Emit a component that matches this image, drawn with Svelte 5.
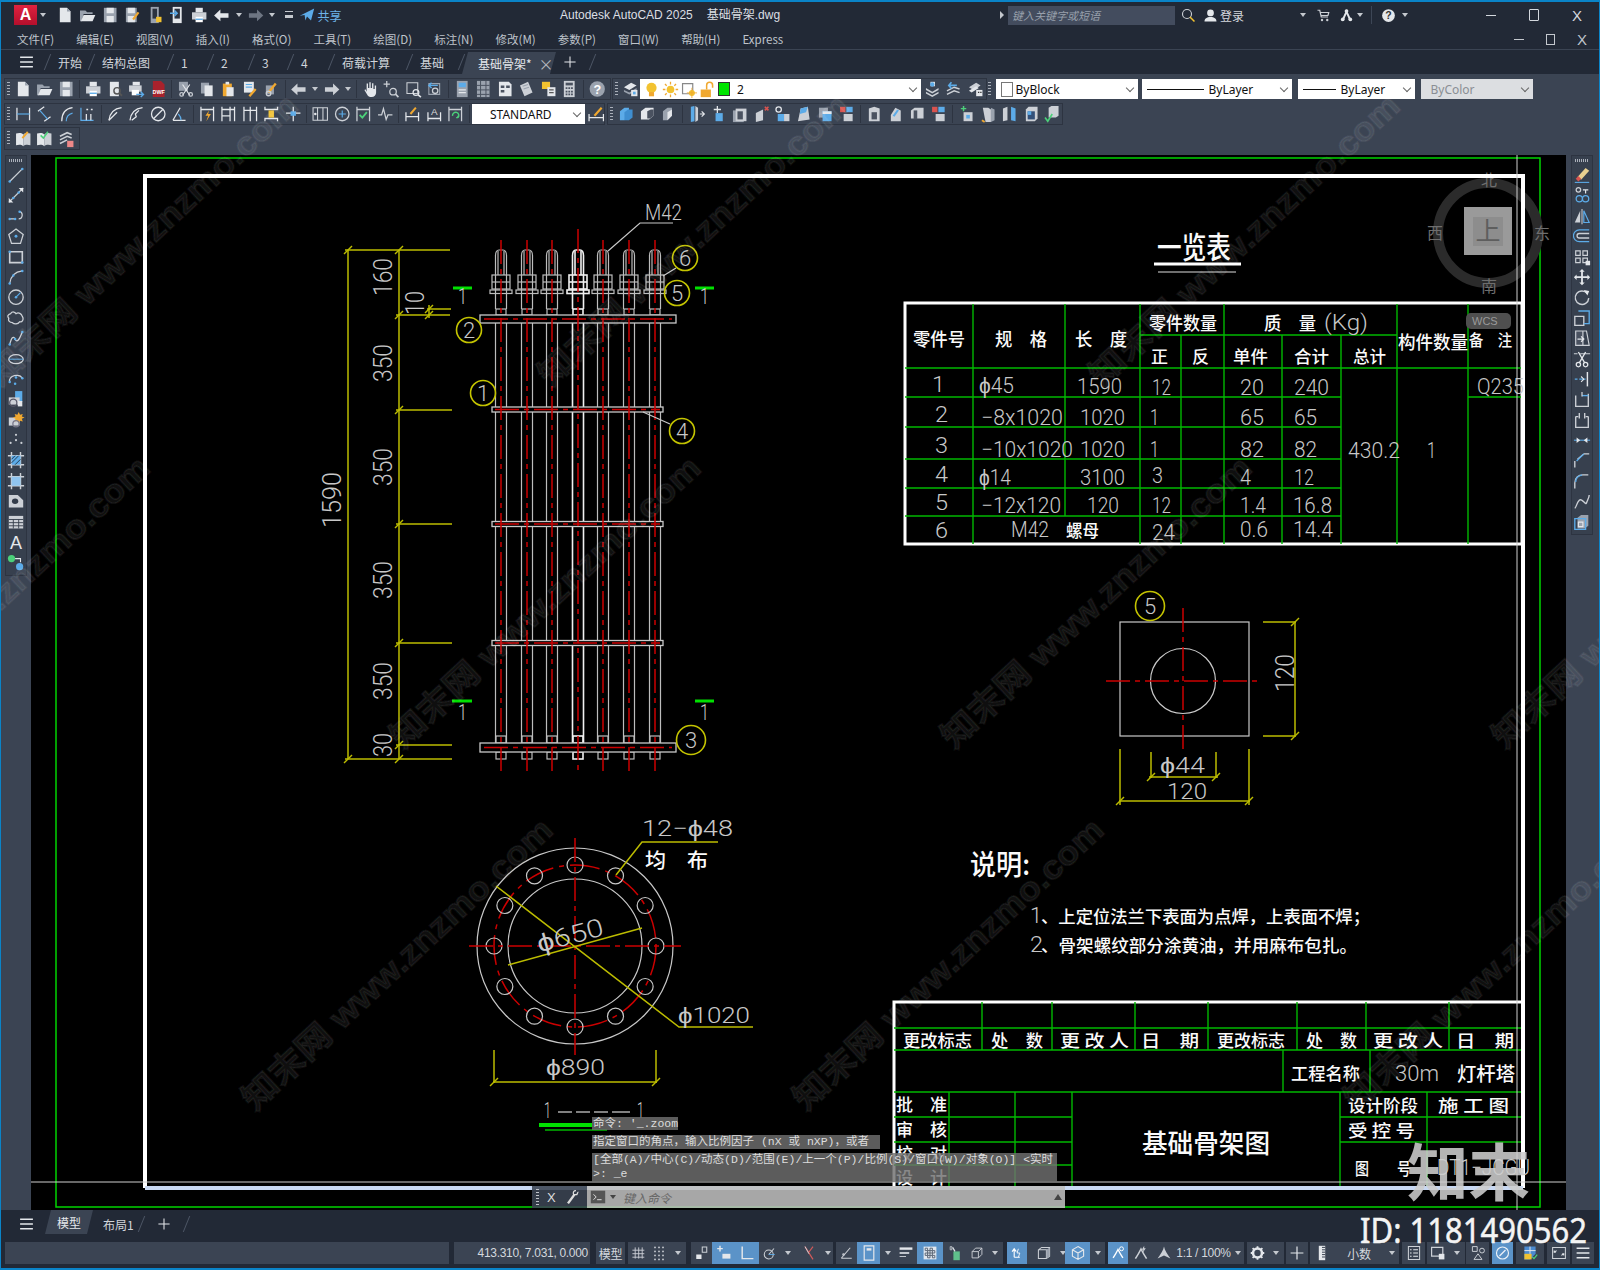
<script>
  const W = '#e4e7eb', G = '#9aa2ae', L = '#ccd0d6', B = '#5cabe8', O = '#f0a830', R = '#d9534f', Y = '#f2c230';
  const s = (d, c = L, w = 1.4) => `<path d="${d}" fill="none" stroke="${c}" stroke-width="${w}"/>`;
  const f = (d, c = L) => `<path d="${d}" fill="${c}"/>`;
  const dot = (x, y, c = B, r = 1.4) => `<circle cx="${x}" cy="${y}" r="${r}" fill="${c}"/>`;
  const ring = (x, y, r, c = L, w = 1.4) => `<circle cx="${x}" cy="${y}" r="${r}" fill="none" stroke="${c}" stroke-width="${w}"/>`;

  const icons = {
    doc: f('M4 2h8l4 4v12H4z', W) + f('M12 2l4 4h-4z', G),
    open: f('M2 5h6l2 2h6v2H6l-2 8H2z', G) + f('M6 10h13l-3 7H3z', W),
    save: f('M3 2h14v16H3z', G) + f('M6 2h8v6H6zM6 11h8v7H6z', W),
    saveas: f('M3 2h12v16H3z', G) + f('M5 2h8v6H5zM5 11h8v7H5z', W) + s('M11 15l6-8', O, 2.4),
    phone: f('M5 1h9v18H5z', G) + f('M7 3h5v11H7z', '#2c3340') + f('M11 12h6v6h-6z', Y),
    phone2: f('M5 1h10v18H5z', W) + f('M7 3h6v11H7z', '#2c3340') + s('M2 8h8M7 5l3 3-3 3', B, 1.6),
    print: f('M6 2h8v5H6z', W) + f('M2 7h16v8H2z', L) + f('M6 12h8v6H6z', '#fff') + f('M6 14h8v1.5H6z', B),
    prev: f('M4 2h10v16H4z', W) + ring(12, 12, 3.5, '#555', 1.6) + s('M14.5 14.5l3 3', '#555', 2),
    pub: f('M6 2h8v4H6z', W) + f('M2 6h14v7H2z', L) + f('M5 11h8v6H5z', '#fff') + s('M10 16h8M15 13l3 3-3 3', B, 1.6),
    dwf: f('M4 1h9l4 4v14H4z', '#a8222c') + `<text x="10.5" y="15" font-size="6" font-weight="700" fill="#fff" text-anchor="middle" font-family="Liberation Sans">DWF</text>`,
    cut: f('M3 2h10v10H3z', G) + s('M7 5l8 12M15 5L7 17', W, 1.3) + ring(6, 16, 2) + ring(16, 16, 2),
    copy: f('M3 3h9v12H3z', G) + f('M7 6h9v12H7z', W),
    paste: f('M4 4h10v14H4z', O) + f('M7 2h4v3H7z', W) + f('M8 8h8v10H8z', W),
    match: f('M3 2h11v12H3z', W) + s('M5 5h7M5 8h7', B, 1.3) + s('M9 18l7-8', O, 2.6),
    brush: f('M4 6h9v10H4z', G) + s('M7 14l8-10', O, 2.6) + ring(7, 15, 2.5, L),
    undo: f('M8 4v4h9v5H8v4L1 10.5z', L),
    redo: f('M12 4v4H3v5h9v4l7-6.5z', L),
    redoD: f('M12 4v4H3v5h9v4l7-6.5z', '#6d7582'),
    undoW: f('M8 4v4h9v5H8v4L1 10.5z', W),
    pan: f('M6 10V4h1.5v5H9V2.5h1.5V9H12V3.5h1.5V10H15V6h1.5v8c0 3-2 5-5 5-2.500 0-4-1-5-3l-3-5 1.200-.8L6 13z', W),
    zoomrt: s('M5 1v7M1.500 4.500h7', L) + ring(12, 13, 3.6) + s('M15 16l3 3', L, 1.8),
    zoomwin: s('M3 3h12v12H3z', L, 1.2) + ring(13, 14, 3.2, W) + s('M15.500 16.500l3 2.500', W, 1.8),
    zoomprev: s('M4 4h12v12H4z', G, 1.2) + ring(11, 12, 3) + s('M5 6h9M7 3L4 6l3 3', B, 1.6),
    props: f('M4 1h12v18H4z', G) + f('M6 3h8v5H6z', B) + s('M6 11h8M6 14h8', W, 1.4),
    design: f('M3 1h14v18H3z', G) + s('M7 1v18M13 1v18M3 6h14M3 11h14M3 16h14', '#4a5260', 1.1),
    sheet: f('M3 2h11l3 3v13H3z', W) + f('M5 6h4v3H5zM11 6h4v3h-4zM5 11h4v3H5z', '#4a5260'),
    tool: f('M3 6l9-4 5 12-9 4z', L) + s('M6 7l6-2M7 10l6-2', G, 1.2),
    mkup: f('M3 2h9v8H3z', Y) + f('M9 8h9v10H9z', W) + s('M11 11h5M11 14h5', '#555', 1.2),
    calc: f('M4 1h12v18H4z', L) + f('M6 3h8v3H6z', '#4a5260') + f('M6 8h2v2H6zM9 8h2v2H9zM12 8h2v2h-2zM6 12h2v2H6zM9 12h2v2H9zM12 12h2v2h-2zM6 15h2v2H6zM9 15h2v2H9zM12 15h2v2h-2z', '#4a5260'),
    help: `<circle cx="10" cy="10" r="8.500" fill="${G}"/><text x="10" y="15" font-size="14" font-weight="700" text-anchor="middle" fill="#fff" font-family="Liberation Sans">?</text>`,
    helpW: `<circle cx="10" cy="10" r="8.500" fill="${W}"/><text x="10" y="15" font-size="14" font-weight="700" text-anchor="middle" fill="#333" font-family="Liberation Sans">?</text>`,
    layer: f('M3 8l8-5 6 3-8 5z', W) + f('M3 11l6 3 8-5v2l-8 5-6-3z', G) + f('M11 11h7v7h-7z', W) + f('M13 13h3v3h-3z', B),
    layers: f('M8 2h5v5H8z', W) + f('M3 9l7 4 7-4v2l-7 4-7-4zM3 13l7 4 7-4v2l-7 4-7-4z', L) + dot(10, 5, B, 2.4),
    layerp: s('M3 16l8-4 6 2M3 12l8-4 6 2', L, 1.6) + s('M5 6h9M8 2.500L5 6l3 3.500', B, 1.8),
    layers2: f('M3 8l8-5 5 3-8 5z', L) + f('M3 12l8-5 3 2-8 5z', W) + f('M11 11h7v7h-7z', W) + f('M13 13h1.500v1.500H13zM15.500 13h1.500v1.500h-1.500z', '#333'),
    dlin: s('M3 3v14M17 3v14', W) + s('M3 10h14', B, 1.3),
    dali: s('M3 7l7-5M10 18l7-5', W) + s('M5 6l9 10', B, 1.3),
    darc: s('M5 18C5 9 9 4 17 3', W) + s('M10 18c0-5 3-8 7-9', B, 1.3),
    dord: s('M3 3v14h14', B, 1.3) + s('M9 10v7M14 10v7M9 5h2M14 5h2', W),
    drad: s('M3 17C4 9 9 4 17 3', W) + s('M3 17l9-9', W),
    djog: s('M3 17C4 9 9 4 17 3', W) + s('M5 17l5-4-1-3 4-4', W),
    ddia: ring(10, 10, 7.500, W) + s('M5 15L15 5', W),
    dang: s('M3 17h14M3 17l8-14', W) + s('M12 17c0-3-1-5-3-7', B, 1.3),
    dqk: s('M3 2v16M17 2v16M3 5h14', W) + f('M12 6l-4 6h3l-2 6 5-8h-3z', O),
    dbase: s('M3 2v16M17 2v16M3 5h14M3 12h9M12 2v16', W),
    dcont: s('M3 2v16M10 2v16M17 2v16M3 6h14', W),
    dspace: s('M3 2v3h14V2M3 18v-3h14v3', W) + f('M7 6h6v8H7z', Y),
    dbrk: s('M10 2v16M2 9h16', W) + f('M7 7h6v5H7z', B),
    tol: s('M2 3h16v14H2z', L, 1.2) + s('M7 3v14M13 3v14', L, 1.2) + dot(4.500, 10, W, 1.4),
    cmark: ring(10, 10, 7.500, L) + s('M10 6v8M6 10h8', B, 1.3),
    insp: s('M3 2v16M17 2v16M3 5h14', L) + s('M6 11l3 3 5-6', '#4cd07a', 2),
    jogl: s('M2 11h4l2-7 3 12 2-5h5', L),
    dedit: s('M3 8v10M17 8v10M3 13h14', W) + s('M8 10l6-7', O, 2.2),
    dtxt: s('M3 8v10M17 8v10M3 15h14', W) + `<text x="10" y="11" font-size="11" text-anchor="middle" fill="#ddd" font-family="Liberation Sans">A</text>`,
    dupd: s('M3 2v16M17 2v16M3 5h14', L) + s('M7 12a3.500 3.500 0 1 1 6 2M13 14l-2 0M13 14l0 -2', '#4cd07a', 1.6),
    dstyle: s('M2 10v8M18 10v8M2 14h16', W) + s('M8 12l8-9', O, 2.4),
    union: f('M3 7l5-4h5v9l-5 5H3z', B) + f('M8 8l4-3h5v9l-4 3H8z', '#3f8ed0'),
    sub: f('M3 7l5-4h9v9l-5 4H3z', W) + f('M10 7l4-2h3v7l-4 3h-3z', '#4a5260'),
    inter: f('M3 7l5-4h5v9l-5 5H3z', G) + f('M8 8l5-3v7l-5 5z', W),
    slice: f('M4 2l4-1v17l-4 1z', B) + f('M9 1l3 2v14l-3 2z', L) + s('M14 10h5M16 7l3 3-3 3', W, 1.3),
    faceM: f('M7 9h8v9H7z', B) + s('M9 1v8M5 5h8', W, 1.4),
    faceO: f('M3 6h12v13H3z', G) + f('M6 4h12v14H6z', L) + f('M8 7h6v9H8z', '#4a5260'),
    faceD: f('M4 9l8-4v12l-8 2z', L) + s('M14 2l4 4M18 2l-4 4', R, 1.8),
    faceR: ring(6, 5, 3, W) + f('M5 10h7v8H5z', B) + f('M12 10h6v8h-6z', L),
    faceT: f('M3 18l3-14 8-2 2 14z', L) + f('M6 4l8-2-2 6-7 2z', B),
    faceC: f('M3 3h10v11H3z', G) + f('M7 7h10v11H7z', B) + f('M7 7h10v3H7z', W),
    faceK: f('M2 2h6v6H2z', R) + f('M9 2h7v6H9z', B) + f('M6 10h10v8H6z', L),
    shell: f('M4 4l6-2 6 2v14H4z', L) + f('M7 8h6v8H7z', '#4a5260'),
    sep2: f('M4 11l5-8 6 3v12H4z', L) + f('M6 12l5-7 2 1-5 7z', B),
    extr: f('M3 6l4-3h10v12H3z', L) + f('M6 6h4v10H6z', '#4a5260'),
    addf: s('M4 4h6M7 1v6', '#4cd07a', 1.6) + f('M7 8h10v10H7z', L) + f('M10 11h4v4h-4z', B),
    press: f('M4 3h6l3 2v14H7z', L) + f('M13 3l4 2v12l-4 2z', G) + s('M3 17l3 2', O, 2),
    sepa: f('M3 4l5-2v15l-5 1z', L) + f('M12 2l5 2v14l-5-1z', B),
    shl: f('M4 5l3-3h10v13l-3 3H4z', L) + f('M6 7h8v9H6z', '#33517a') + f('M6 7h4v4H6z', B),
    chk: f('M6 3l3-2h8v11l-3 2H6z', L) + s('M2 14l3 4 5-8', '#4cd07a', 1.8),
    book: f('M2 4c3-1 6-1 8 1v13c-2-2-5-2-8-1z', W) + f('M10 5c2-2 5-2 8-1v13c-3-1-6-1-8 1z', L) + s('M9 9l6-7', O, 2.2),
    bookC: f('M2 4c3-1 6-1 8 1v13c-2-2-5-2-8-1z', W) + f('M10 5c2-2 5-2 8-1v13c-3-1-6-1-8 1z', L) + s('M6 6l3 3 5-7', '#4cd07a', 1.8),
    stack: s('M3 7l8-4 5 2M3 11l8-4 5 2M3 15l8-4', L, 1.8) + f('M11 12h7v7h-7z', '#e88') ,

    line: s('M3 17L17 3', L) + dot(3, 17) + dot(17, 3),
    xline: s('M2 18L18 2', L) + f('M13 2h5v5zM2 13v5h5z', W) + dot(7, 13) + dot(13, 7),
    pline: s('M3 13h6M14 5c4 0 4 8-1 8', L) + dot(3, 13) + dot(9, 13) + dot(14, 5),
    polyg: s('M10 2l8 6-3 10H5L2 8z', L) + dot(10, 10, B, 1.6),
    rect: s('M3 4h14v12H3z', L, 1.8) + dot(3, 4) + dot(17, 16),
    arc: s('M3 17C4 9 9 4 17 3', L) + dot(3, 17) + dot(7, 8) + dot(17, 3),
    circ: ring(10, 10, 8, L, 1.5) + s('M10 10l5-5', B, 1.3) + dot(10, 10),
    cloud: s('M4 5c2-3 5-2 6 0 3-2 6 0 7 3 2 3 0 7-3 6-2 3-6 3-8 1-3 0-5-2-4-5-2-2-1-4 2-5z', L),
    spline: s('M3 17c2-8 4-10 6-6s4 2 8-8', L) + dot(3, 17) + dot(9, 11) + dot(17, 3),
    ellip: `<ellipse cx="10" cy="10" rx="8" ry="5" fill="none" stroke="${L}" stroke-width="1.500"/>` + s('M2 10h16', B, 1.1),
    earc: s('M3 13C1 6 14 3 17 9', L) + dot(3, 13) + dot(10, 8) + dot(17, 9) + dot(9, 15),
    insert: f('M9 1h8v12H9z', B) + f('M2 8h12v8H2z', L) + ring(7, 14, 4, '#556') + f('M12 12h5v6h-5z', W),
    block: f('M2 7h12v9H2z', L) + f('M13 1l1.500 3 3-1-1 3 3 1-3 1.500 1 3-3-1-1.500 3-1.500-3-3 1 1-3-3-1.500 3-1-1-3 3 1z', O) + ring(10, 14, 3.500, '#778'),
    point: dot(10, 4, L, 1.2) + dot(4, 13, L, 1.2) + dot(16, 13, L, 1.2) + dot(10, 10, L, 1.2),
    hatch: s('M1 5h18M1 15h18M5 1v18M15 1v18', L, 1.6) + f('M5 5h10v10H5z', B) + s('M5 9l4-4M5 13l8-8M9 15l6-6', '#234', 1),
    grad: s('M1 5h18M1 15h18M5 1v18M15 1v18', L, 1.6) + f('M5 5h10v10H5z', '#8fc4ef'),
    region: f('M2 3h10l6 6v8H2z', L) + `<ellipse cx="9" cy="10" rx="3.500" ry="3" fill="#333c4a"/>`,
    table: f('M2 3h16v14H2z', L) + s('M2 7h16M2 10.500h16M2 14h16M7 7v10M13 7v10', '#333c4a', 1),
    atext: `<text x="10" y="17" font-size="20" text-anchor="middle" fill="${W}" font-family="Liberation Sans">A</text>`,
    addsel: dot(5, 6, '#4cd07a', 4) + s('M9 6h6v4', W, 1.2) + dot(14, 15, B, 4),

    erase: s('M2 18h16', B, 1.2) + f('M5 12l9-10 4 3-9 10z', '#e8d090') + f('M3 14l3-3 3 3-3 3z', R),
    copyo: ring(6, 4, 2.500) + s('M11 4h6M14 4v4', W, 1.3) + ring(7, 14, 3.500, B) + ring(14, 14, 3.500, B),
    mirror: f('M2 17L8 4v13z', L) + s('M10 2v17', W, 1) + s('M18 17L12 4v13z', B, 1.3),
    offset: s('M18 3H7a6 6 0 0 0 0 13h11', B, 1.4) + s('M18 7H7a2 2 0 0 0 0 5h11', L, 1.4),
    array: s('M3 3h5v5H3zM11 3h5v5h-5zM3 11h5v5H3zM11 11h5v5h-5z', L, 1.3) + f('M14 14h5v5h-5z', W),
    move: f('M10 1l3 3h-2v5h5V7l3 3-3 3v-2h-5v5h2l-3 3-3-3h2v-5H4v2l-3-3 3-3v2h5V4H7z', W),
    rotate: s('M16 6A7.500 7.500 0 1 0 17.500 11', L, 1.6) + f('M12 2l6 1-2 5z', W),
    scale: s('M2 8h10v10H2z', L, 1.5) + s('M6 2h12v14h-6', B, 1.5),
    stretch: f('M3 2h8v16H3z', '#4a5260') + s('M3 2h8v16H3zM11 2h4l3 16h-7', L, 1.3) + s('M5 11h7M9 8l3 3-3 3', W, 1.4),
    trim: s('M1 4h4M8 4h11', L, 1.2) + s('M6 2l7 12M14 2L7 14', W, 1.5) + ring(6, 16, 2.400, W) + ring(14, 16, 2.400, W),
    extend: s('M16 2v16', W, 1.6) + s('M2 10h3M7 10h7', B, 1.3) + s('M9 7l3 3-3 3', W, 1.2),
    brkpt: s('M3 6v12h14V4', L, 1.5) + s('M10 6h7', B, 1.5) + s('M10 2v5', L),
    brk: s('M3 6v12h14V6M3 6h3M14 6h3', L, 1.5) + s('M7 2v6M13 2v6', L, 1.5),
    join: s('M1 10h18', B, 1.2) + f('M4 7l4 3-4 3zM16 7l-4 3 4 3z', W),
    chamf: s('M2 18v-7M5 9l7-6M12 3h6', L, 1.5) + s('M4 11l8-8', B, 1.5),
    fillet: s('M2 18v-6M2 12c0-6 4-9 9-9h6', L, 1.5) + s('M3 11c0-4 3-7 7-8', B, 1.5),
    blend: s('M2 18c2-2 2-6 5-9s7 6 8 3 3-6 3-9', L, 1.5),
    explode: f('M5 5l4-3h8v12l-4 3H5z', G) + s('M2 6h12v12H2z', B, 1.5) + s('M6 10h5v5H6z', W, 1.3),

    user: f('M10 2a4 4 0 1 1 0 9 4 4 0 0 1 0-9zM2 18c0-4 3-6 8-6s8 2 8 6z', W),
    search: ring(8, 8, 6, L, 1.5) + s('M12 12l6 6', Y, 2),
    cart: s('M2 3h3l2 9h9M6 6h11l-1 4H7', L, 1.6) + dot(8, 16, L, 1.600) + dot(15, 16, L, 1.600),
    a360: f('M10 2l7 15h-3l-4-9-4 9H3z', W) + dot(5, 15, W, 2.500) + dot(15, 15, W, 2.500) + dot(10, 4, W, 2.500),
    share: f('M1 11L19 2l-4 15-5-5-2 5-1-7z', B),

    grid: s('M6 2v16M11 2v16M16 2v16M2 6h17M2 11h17M2 16h17', L, 1.3),
    snap: dot(5, 3, L, 1.1) + dot(10, 3, L, 1.1) + dot(15, 3, L, 1.1) + dot(5, 8, L, 1.1) + dot(10, 8, L, 1.1) + dot(15, 8, L, 1.1) + dot(5, 13, L, 1.1) + dot(10, 13, L, 1.1) + dot(15, 13, L, 1.1) + dot(5, 18, L, 1.1) + dot(10, 18, L, 1.1) + dot(15, 18, L, 1.1),
    ifer: s('M11 2h6v7h-6z', L, 1.4) + f('M3 12h7v6H3z', W),
    dyn: s('M5 1v7M1.500 4.500h7', W, 1.8) + f('M8 11h10v6H8z', W),
    ortho: s('M4 2v15h14', W, 1.8),
    polar: ring(9, 12, 6, L) + s('M9 12l7-8', L) + s('M9 12h8', B, 1.2),
    iso: s('M5 2l10 16M15 2L9 10', '#d25a5a', 1.5) + s('M5 2l5 9', L, 1.2),
    osnap: s('M3 17L15 3M3 17h14', L, 1.4) + ring(6, 12, 1, L),
    track: s('M4 1h12v18H4z', W, 1.5) + f('M7 4h6v3H7z', W),
    lwt: f('M2 3h16v3H2z', W) + f('M2 9h12v2H2z', W) + f('M2 14h8v1H2z', W),
    transp: f('M2 2h16v16H2z', '#dfe6ee') + s('M4 4h3v3H4zM10 4h3v3h-3zM7 7h3v3H7zM13 7h3v3h-3zM4 10h3v3H4zM10 10h3v3h-3zM7 13h3v3H7zM13 13h3v3h-3z', '#5a6474', 1.2),
    qp: s('M4 2h2v4H4z', L, 1) + f('M8 8h8v11H8z', '#5fc08c') + s('M7 3l3 5', W, 1.5),
    sel: s('M3 8l5-5h9v9l-5 5H3z', L, 1.3) + s('M3 8h9v9M12 8l5-5', L, 1.3),
    gizmo: s('M6 16V5M3 8l3-4 3 4M6 16h8', '#fff', 1.6) + s('M12 4l-2 6h4l-2 6', '#fff', 1.2),
    rect3: s('M3 6l4-3h10v11l-4 3H3zM3 6h10v11', L, 1.3) + f('M13 6l4-3v11l-4 3z', G),
    cube: s('M10 2l7 4v8l-7 4-7-4V6zM3 6l7 4 7-4M10 10v8', W, 1.4),
    annA: s('M3 17c2-3 4-6 7-12 3 6 5 9 7 12', '#fff', 2) + ring(15, 4, 2.800, '#fff', 1.4),
    annB: s('M3 17c2-3 4-6 7-12 3 6 5 9 7 12', L, 2) + f('M14 1l-3 5h2l-1 4 4-6h-2z', L),
    annC: f('M10 2c1 5 4 9 8 15l-8-4-8 4c4-6 7-10 8-15z', L),
    gear: `<circle cx="10" cy="10" r="6" fill="none" stroke="${W}" stroke-width="3.500"/>` + s('M10 1v3M10 16v3M1 10h3M16 10h3M3.500 3.500l2 2M14.500 14.500l2 2M16.500 3.500l-2 2M3.500 16.500l2-2', W, 2.4),
    plus: s('M10 2v16M2 10h16', W, 1.5),
    ruler: f('M6 1h8v18H6z', W) + s('M10 3h4M10 6h4M10 9h4M10 12h4M10 15h4', '#333c4a', 1.2),
    list: s('M3 2h14v16H3z', L, 1.3) + s('M5 6h2M5 10h2M5 14h2M9 6h6M9 10h6M9 14h6', W, 1.3),
    lock: s('M2 3h14v11H2z', L, 1.5) + f('M11 11h7v7h-7z', W),
    shapes: s('M3 2h6v6H3z', L, 1.2) + ring(15, 7, 3, L, 1.2) + s('M10 11l5 7H5z', L, 1.2),
    isol: ring(10, 10, 8, '#eef3f8', 1.5) + s('M6 14l8-8', '#eef3f8', 1.6),
    annot: f('M3 2h14v9l-7 7H3z', '#4a8ad0') + f('M3 11h9v7H3z', Y) + s('M13 15l2 2 4-5', '#4cd07a', 1.6) + s('M10 2v9M3 7h14', W, 1.2),
    full: s('M2 3h16v14H2z', L, 1.3) + s('M7 7l-3 2M4 7v2h2M13 13l3-2M16 13v-2h-2', W, 1.3),
    burger: f('M2 3h16v2H2zM2 9h16v2H2zM2 15h16v2H2z', W),
    prompt: f('M2 3h16v14H2z', '#555') + s('M5 7l3 3-3 3M9 13h5', '#ddd', 1.1),
    wrench: s('M5 18L13 7', '#ddd', 3) + s('M15 2c-3 0-4 2-3 5l4 0c1-2 1-3 2-3', '#ddd', 1.6),
    bulb: `<circle cx="10" cy="8" r="6" fill="${Y}"/>` + f('M7 13h6v5H7z', O),
    sun: `<circle cx="10" cy="10" r="4.500" fill="${Y}"/>` + s('M10 1v3M10 16v3M1 10h3M16 10h3M3.500 3.500l2 2M14.500 14.500l2 2M16.500 3.500l-2 2M3.500 16.500l2-2', O, 1.5),
    frz: s('M3 3h12v12H3z', '#888', 1.4) + `<circle cx="14" cy="14" r="3.500" fill="${Y}"/>` + s('M14 8v12M8 14h12', O, 1),
    unlk: f('M2 10h12v9H2z', O) + s('M9 10V5a3.500 3.500 0 0 1 7 0v3', O, 1.800)
  };

  const row1a = ['doc', 'open', 'save', '|', 'print', 'prev', 'pub', 'dwf', '|', 'cut', 'copy', 'paste', 'match', 'brush', '|', 'undo', '^', 'redo', '^', '|', 'pan', 'zoomrt', 'zoomwin', 'zoomprev', '|', 'props', 'design', 'sheet', 'tool', 'mkup', 'calc', '|', 'help'];
  const row2a = ['dlin', 'dali', 'darc', 'dord', '|', 'drad', 'djog', 'ddia', 'dang', '|', 'dqk', 'dbase', 'dcont', 'dspace', 'dbrk', '|', 'tol', 'cmark', 'insp', 'jogl', '|', 'dedit', 'dtxt', 'dupd'];
  const row2b = ['union', 'sub', 'inter', '|', 'slice', 'faceM', 'faceO', 'faceD', 'faceR', 'faceT', 'faceC', 'faceK', '|', 'shell', 'sep2', 'extr', 'faceK', '|', 'addf', 'press', 'sepa', 'shl', 'chk'];
  const qat = ['doc', 'open', 'save', 'saveas', 'phone', 'phone2', 'print'];
  const leftTools = ['line', 'xline', 'pline', 'polyg', 'rect', 'arc', 'circ', 'cloud', 'spline', 'ellip', 'earc', 'insert', 'block', 'point', 'hatch', 'grad', 'region', 'table', 'atext', 'addsel'];
  const rightTools = ['erase', 'copyo', 'mirror', 'offset', 'array', 'move', 'rotate', 'scale', 'stretch', 'trim', 'extend', 'brkpt', 'brk', 'join', 'chamf', 'fillet', 'blend', 'explode'];
  const menus = ['文件(F)', '编辑(E)', '视图(V)', '插入(I)', '格式(O)', '工具(T)', '绘图(D)', '标注(N)', '修改(M)', '参数(P)', '窗口(W)', '帮助(H)', 'Express'];
  const tabs = [['开始', 43], ['结构总图', 78], ['1', 39], ['2', 40], ['3', 38], ['4', 40], ['荷载计算', 77], ['基础', 51]];

  // status bar: [from, to, items]; an item is [icon, width, active] or text
  const statusGroups = [
    [5, 449, []],
    [454, 590, [['#413.310, 7.031, 0.000', 134]]],
    [596, 625, [['#模型', 29]]],
    [628, 686, [['grid', 20], ['snap', 22], ['^', 16]]],
    [691, 833, [['ifer', 21], ['dyn', 23, 1], ['ortho', 24, 1], ['polar', 21], ['^', 16], ['iso', 26], ['^', 11]]],
    [836, 1003, [['osnap', 21], ['track', 23, 1], ['^', 15], ['lwt', 22], ['transp', 26, 1], ['qp', 24], ['sel', 20], ['^', 16]]],
    [1007, 1105, [['gizmo', 20, 1], ['rect3', 34], ['^', 4], ['cube', 25, 1], ['^', 15]]],
    [1108, 1244, [['annA', 20, 1], ['annB', 25], ['annC', 22], ['#1:1 / 100%', 57], ['^', 12]]],
    [1247, 1284, [['gear', 21], ['^', 16]]],
    [1286, 1308, [['plus', 22]]],
    [1310, 1399, [['ruler', 24], ['#小数', 50], ['^', 15]]],
    [1402, 1425, [['list', 23]]],
    [1427, 1465, [['lock', 22], ['^', 16]]],
    [1466, 1489, [['shapes', 23]]],
    [1492, 1513, [['isol', 21, 1]]],
    [1516, 1544, [['annot', 28]]],
    [1547, 1570, [['full', 23]]],
    [1572, 1594, [['burger', 22]]]
  ].map((g, i, a) => ({ x: g[0], w: g[1] - g[0], gap: i ? g[0] - a[i - 1][1] : 5, items: g[2] }));

  // ---- drawing data, coordinates are those of the page ----
  const rods = [501, 527, 552, 578, 603, 629, 655];
  const holes = Array.from({ length: 12 }, (_, i) => [575 + 81 * Math.cos((i * Math.PI) / 6), 946 + 81 * Math.sin((i * Math.PI) / 6)]);
  const rings = [524, 643];

  const frameGreen = 'M56 158H1540V1207H56z';
  const tableGreen = [
    'M973 304V544', 'M1065 304V516', 'M1140 304V544', 'M1181 335V544', 'M1224 304V544', 'M1282 335V544', 'M1341 335V544', 'M1397 304V544', 'M1468 304V544',
    'M905 368H1521', 'M1140 335H1397', 'M905 397H1341', 'M905 427H1341', 'M905 459H1341', 'M905 488H1341', 'M905 516H1341', 'M1468 397H1521',
    'M982 1002V1050', 'M1052 1002V1050', 'M1135 1002V1050', 'M1208 1002V1050', 'M1297 1002V1050', 'M1366 1002V1050', 'M1449 1002V1050',
    'M894 1028H1521', 'M894 1050H1521', 'M894 1092H1521', 'M1283 1050V1092', 'M1370 1050V1092', 'M949 1092V1186', 'M1015 1092V1186', 'M1072 1092V1186',
    'M1340 1092V1186', 'M1427 1092V1186', 'M894 1117H1072', 'M894 1142H1072', 'M894 1165H1072', 'M1340 1117H1521', 'M1340 1142H1521'
  ];
  const yellow = [
    'M348 250V759', 'M399 250V759', 'M345 250H450', 'M396 315H450', 'M427 309H451', 'M396 410H452', 'M396 524H452', 'M396 643H452', 'M396 745H452', 'M345 759H452',
    'M429 305V318',
    'M496 886L679 1027H753', 'M508 965L642 928', 'M718 842H642L616 875', 'M494 1050V1083', 'M656 1050V1083', 'M493 1082H657',
    'M1263 622H1296', 'M1263 736H1296', 'M1295 622V736', 'M1120 749V805', 'M1249 749V805', 'M1119 801H1250', 'M1151 752V778', 'M1216 752V778', 'M1149 777H1218'
  ];
  const ticks = [[348, 250], [399, 250], [399, 315], [399, 410], [399, 524], [399, 643], [399, 745], [399, 759], [348, 759], [429, 309], [429, 315], [1295, 622], [1295, 736], [1120, 801], [1249, 801], [1151, 777], [1216, 777], [494, 1082], [656, 1082]];
  const bubbles = [[685, 258, '6', 12.5], [677, 293, '5', 12.5], [469, 330, '2', 12.5], [483, 393, '1', 12.5], [682, 431, '4', 12.5], [691, 740, '3', 14.5], [1150, 606, '5', 14.5]];

  // [x1, x2, baseline, text, size]
  const han = [
    [1157, 1231, 258, '一览表', 30],
    [913, 965, 346, '零件号', 18], [995, 1047, 346, '规　格', 18], [1075, 1127, 346, '长　度', 18],
    [1149, 1217, 330, '零件数量', 18], [1264, 1316, 330, '质　量', 18],
    [1151, 1168, 363, '正', 17], [1192, 1209, 363, '反', 17], [1233, 1268, 363, '单件', 17], [1294, 1329, 363, '合计', 17], [1353, 1386, 363, '总计', 17],
    [1398, 1468, 349, '构件数量', 18], [1469, 1512, 346, '备　注', 16], [1066, 1099, 537, '螺母', 17],
    [645, 708, 868, '均　布', 20],
    [970, 1030, 875, '说明:', 28],
    [1041, 1370, 923, '、上定位法兰下表面为点焊，上表面不焊；', 17], [1041, 1357, 952, '、骨架螺纹部分涂黄油，并用麻布包扎。', 17],
    [903, 972, 1047, '更改标志', 17], [991, 1043, 1047, '处　数', 17], [1060, 1129, 1047, '更 改 人', 17], [1141, 1199, 1047, '日　期', 17],
    [1217, 1285, 1047, '更改标志', 17], [1306, 1357, 1047, '处　数', 17], [1373, 1443, 1047, '更 改 人', 17], [1456, 1514, 1047, '日　期', 17],
    [1291, 1360, 1080, '工程名称', 17], [1457, 1515, 1081, '灯杆塔', 19],
    [896, 947, 1111, '批　准', 17], [896, 947, 1136, '审　核', 17], [896, 947, 1160, '校　对', 17], [896, 947, 1184, '设　计', 17],
    [1142, 1270, 1153, '基础骨架图', 26],
    [1348, 1418, 1112, '设计阶段', 17], [1438, 1509, 1112, '施 工 图', 17], [1348, 1415, 1137, '受 控 号', 17], [1355, 1411, 1175, '图　　号', 17]
  ];
  const num = [
    [932, 945, 392, '1'], [979, 1014, 393, 'ϕ45'], [1077, 1122, 394, '1590'], [1152, 1171, 395, '12'], [1240, 1264, 395, '20'], [1294, 1329, 395, '240'], [1477, 1524, 394, 'Q235'],
    [935, 948, 422, '2'], [981, 1063, 425, '−8x1020'], [1080, 1125, 425, '1020'], [1150, 1159, 425, '1'], [1240, 1264, 425, '65'], [1294, 1317, 425, '65'],
    [935, 948, 453, '3'], [981, 1073, 457, '−10x1020'], [1080, 1125, 457, '1020'], [1150, 1159, 457, '1'], [1240, 1264, 457, '82'], [1294, 1317, 457, '82'],
    [935, 948, 482, '4'], [979, 1011, 485, 'ϕ14'], [1080, 1125, 485, '3100'], [1152, 1163, 483, '3'], [1240, 1251, 485, '4'], [1294, 1314, 485, '12'],
    [935, 948, 510, '5'], [981, 1061, 513, '−12x120'], [1087, 1119, 513, '120'], [1152, 1171, 513, '12'], [1240, 1266, 513, '1.4'], [1293, 1332, 513, '16.8'],
    [935, 948, 538, '6'], [1011, 1049, 537, 'M42'], [1152, 1175, 540, '24'], [1240, 1268, 537, '0.6'], [1293, 1333, 537, '14.4'],
    [1348, 1400, 458, '430.2'], [1427, 1436, 458, '1'], [1324, 1368, 330, '(Kg)'],
    [645, 682, 220, 'M42'], [458, 467, 304, '1'], [700, 709, 304, '1'], [458, 467, 720, '1'], [700, 709, 720, '1'],
    [642, 733, 836, '12−ϕ48'], [678, 750, 1023, 'ϕ1020'], [546, 605, 1075, 'ϕ890'],
    [1160, 1205, 773, 'ϕ44'], [1167, 1207, 799, '120'],
    [1030, 1042, 923, '1'], [1030, 1043, 952, '2'],
    [1395, 1439, 1081, '30m'], [1437, 1530, 1175, 'DT1−JCGU'],
    [544, 551, 1118, '1'], [637, 644, 1118, '1']
  ];
  // [cx, cy, text, length, angle]
  const turned = [
    [383, 277, '160', 38, -90], [415, 303, '10', 24, -90], [383, 363, '350', 38, -90], [383, 467, '350', 38, -90], [383, 580, '350', 38, -90], [383, 681, '350', 38, -90], [383, 745, '30', 24, -90],
    [332, 500, '1590', 56, -90], [1285, 673, '120', 38, -90], [570, 935, 'ϕ650', 68, -15]
  ];

  const marks = [];
  for (let j = 0; j < 3; j++) {
    for (let i = -2; i < 4; i++) {
      const x = 255 + 551 * i + 148 * j;
      if (x > -200 && x < 1560) marks.push([x, 1112 - 362 * j]);
    }
  }
</script>

{#snippet ic(n)}
  <svg class="glyph" viewBox="0 0 20 20">{@html icons[n]}</svg>
{/snippet}

{#snippet bar(list)}
  {#each list as n}
    {#if n === '|'}
      <span class="sep"></span>
    {:else if n === '^'}
      <span class="caret narrow"></span>
    {:else}
      <span class="tool">{@render ic(n)}</span>
    {/if}
  {/each}
{/snippet}

<div class="app">
  <header class="title">
    <div class="t-left">
      <span class="logo">A</span>
      <span class="caret wide"></span>
      <div class="qat">
        {#each qat as n}<span class="tool">{@render ic(n)}</span>{/each}
        <span class="tool">{@render ic('undoW')}</span><span class="caret narrow"></span>
        <span class="tool">{@render ic('redoD')}</span><span class="caret narrow"></span>
        <span class="qat-more"></span>
        <span class="share">{@render ic('share')}</span>
        <span class="share-t">共享</span>
      </div>
    </div>
    <div class="t-mid"><span>Autodesk AutoCAD 2025</span><span>基础骨架.dwg</span></div>
    <div class="t-right">
      <span class="tri"></span>
      <span class="search">键入关键字或短语</span>
      <span class="mini m1">{@render ic('search')}</span>
      <span class="mini m2">{@render ic('user')}</span>
      <span class="login">登录</span>
      <span class="caret c1"></span>
      <span class="mini m3">{@render ic('cart')}</span>
      <span class="mini m4">{@render ic('a360')}</span>
      <span class="caret c2"></span>
      <span class="vbar"></span>
      <span class="mini m5">{@render ic('helpW')}</span>
      <span class="caret c3"></span>
      <span class="win min"></span>
      <span class="win max"></span>
      <span class="win close">X</span>
    </div>
  </header>

  <nav class="menu">
    {#each menus as m}<span>{m}</span>{/each}
    <div class="menu-win"><i class="d-min"></i><i class="d-max"></i><b>X</b></div>
  </nav>

  <div class="tabs">
    <span class="tab-burger">{@render ic('burger')}</span>
    <span class="slash"></span>
    {#each tabs as [t, w]}
      <span class="tab" style="width:{w}px">{t}</span><span class="slash"></span>
    {/each}
    <span class="tab-on">基础骨架*<em>×</em></span>
    <span class="tab-add">{@render ic('plus')}</span>
    <span class="slash"></span>
  </div>

  <section class="tools">
    <div class="row r1">
      <div class="panel"><span class="grip"></span>{@render bar(row1a)}</div>
      <div class="panel layerbox">
        <span class="grip"></span>
        <span class="tool">{@render ic('layer')}</span>
        <div class="combo layercombo">
          <span class="st">{@render ic('bulb')}</span>
          <span class="st">{@render ic('sun')}</span>
          <span class="st">{@render ic('frz')}</span>
          <span class="st">{@render ic('unlk')}</span>
          <span class="swatch"></span>
          <span class="lname">2</span>
        </div>
        <span class="tool">{@render ic('layers')}</span>
        <span class="tool">{@render ic('layerp')}</span>
        <span class="tool">{@render ic('layers2')}</span>
      </div>
      <div class="strip">
        <span class="grip"></span>
        <div class="combo byblock"><span class="box"></span>ByBlock</div>
        <div class="combo bylayer"><span class="rule long"></span>ByLayer</div>
        <div class="combo bylayer2"><span class="rule short"></span>ByLayer</div>
        <div class="combo bycolor">ByColor</div>
      </div>
    </div>
    <div class="row r2">
      <div class="panel p2a">
        <span class="grip"></span>{@render bar(row2a)}
        <span class="sep"></span>
        <div class="combo standard">STANDARD</div>
        <span class="tool">{@render ic('dstyle')}</span>
      </div>
      <div class="panel p2b"><span class="grip"></span>{@render bar(row2b)}</div>
    </div>
    <div class="row r3">
      <div class="panel"><span class="grip"></span>{@render bar(['book', 'bookC', 'stack'])}</div>
    </div>
  </section>

  <main class="work">
    <aside class="side left">
      <div class="vpanel">
        <span class="vgrip"></span>
        {#each leftTools as n}<span class="vtool">{@render ic(n)}</span>{/each}
      </div>
    </aside>

    <div class="canvas">
      <svg class="draw" viewBox="31 155 1535 1055" width="1535" height="1055">
        <path d={frameGreen} class="g-frame" />

        <!-- view cube -->
        <circle cx="1488" cy="233" r="50" class="cube-ring" />
        <rect x="1464" y="207" width="48" height="48" class="cube-a" />
        <rect x="1473" y="217" width="30" height="29" class="cube-b" />
        <text x="1488" y="240" class="cube-t" font-size="25" text-anchor="middle">上</text>
        <text x="1489" y="186" class="cube-l" font-size="16" text-anchor="middle">北</text>
        <text x="1435" y="239" class="cube-l" font-size="16" text-anchor="middle">西</text>
        <text x="1542" y="239" class="cube-l" font-size="16" text-anchor="middle">东</text>
        <text x="1489" y="292" class="cube-l" font-size="16" text-anchor="middle">南</text>

        <!-- sheet frame -->
        <path d="M145 1188V176H1523V1188" class="w-frame" />
        <path d="M145 1188H1523" class="w-sel" />
        <rect x="905" y="303" width="617" height="241" class="w-box" />
        <path d="M894 1188V1002H1522" class="w-box" />

        {#each tableGreen as d}<path {d} class="g-line" />{/each}

        <path d="M1154 264H1241" class="w-ul" />
        <path d="M1158 272H1236" class="w-ul2" />

        <!-- front view -->
        {#each rods as x, i}
          <g class:hot={i === 3} class="metal">
            <path d="M{x - 5.5} 293V256Q{x - 5.5} 250 {x - 2} 250H{x + 2}Q{x + 5.5} 250 {x + 5.5} 256V293" />
            <path d="M{x - 3} 251V275" />
            <path d="M{x + 3} 251V275" />
            <rect x={x - 9} y="275" width="18" height="14" />
            <path d="M{x - 9} 282H{x + 9}" />
            <rect x={x - 11} y="290" width="22" height="3.500" />
            <rect x={x - 5} y="309" width="10" height="6" />
            <path d="M{x - 5.500} 293V309M{x + 5.500} 293V309" />
            <path d="M{x - 5.500} 323V743M{x + 5.500} 323V743" />
            <rect x={x - 5} y="736" width="10" height="7" />
            <rect x={x - 5} y="752" width="10" height="7" />
          </g>
        {/each}
        <rect x="480" y="315" width="196" height="8" class="plate" />
        <rect x="492" y="407" width="171" height="5" class="plate" />
        {#each rings as y}<rect x="492" y={y - 2.5} width="171" height="5" class="plate" />{/each}
        <rect x="480" y="743" width="196" height="9" class="plate" />
        {#each rods as x, i}
          <path d="M{x} {i === 3 ? 229 : 240}V773" class="red" />
        {/each}
        <path d="M484 319H672" class="red" />
        <path d="M495 409.500H660" class="red" />
        {#each rings as y}<path d="M495 {y}H660" class="red" />{/each}
        <path d="M484 747.500H672" class="red" />
        <path d="M608 251L640 223H673" class="gray" />
        <path d="M663 276L676 268" class="gray" />
        <path d="M643 412L670 424" class="gray" />
        <path d="M453 288H472M695 288H714M452 701H472M695 701H714" class="g-mark" />

        <!-- plan of the base plate -->
        <circle cx="575" cy="946" r="98" class="gray" />
        <circle cx="575" cy="946" r="67" class="gray" />
        <circle cx="575" cy="946" r="81" class="red arcs" />
        {#each holes as [x, y]}<circle cx={x} cy={y} r="8" class="gray" />{/each}
        <path d="M469 946H681M575 838V1055" class="red" />

        <!-- plate 5 -->
        <rect x="1120" y="622" width="129" height="114" class="gray" />
        <circle cx="1183" cy="681" r="32.500" class="gray" />
        <path d="M1106 681H1260M1183 608V750" class="red" />

        {#each yellow as d}<path {d} class="dim" />{/each}
        {#each ticks as [x, y]}<path d="M{x - 4} {y + 4}L{x + 4} {y - 4}" class="dim" />{/each}
        {#each bubbles as [x, y, t, r]}
          <circle cx={x} cy={y} {r} class="bubble" />
          <text x={x} y={y + 8} class="n" font-size="22" text-anchor="middle">{t}</text>
        {/each}

        {#each num as [a, b, y, t]}
          <text x={a} {y} class="n" font-size="22" textLength={b - a} lengthAdjust="spacingAndGlyphs">{t}</text>
        {/each}
        {#each turned as [x, y, t, len, a]}
          <text x={x - len / 2} y={y + 9} class="n" font-size="25" textLength={len} lengthAdjust="spacingAndGlyphs" transform="rotate({a} {x} {y})">{t}</text>
        {/each}
        {#each han as [a, b, y, t, size]}
          <text x={a} {y} class="c" font-size={size} textLength={b - a} lengthAdjust="spacingAndGlyphs">{t}</text>
        {/each}

        <path d="M558 1112H572M576 1112H590M594 1112H608M612 1112H630" class="dash" />
        <path d="M539 1125H592" class="g-bar" />
        <path d="M545 1130H607" class="g-line" />
        <rect x="1466" y="313" width="45" height="16" rx="5" class="wcs" />
        <text x="1472" y="325" font-size="11" class="wcs-t">WCS</text>

        <path d="M31 1182H1566M1517 155V1210" class="cross" />
      </svg>

      <div class="cmd">
        <div class="hist">
          <span class="h1">命令: '_.zoom</span>
          <span class="h2">指定窗口的角点，输入比例因子 (nX 或 nXP)，或者</span>
          <span class="h3">[全部(A)/中心(C)/动态(D)/范围(E)/上一个(P)/比例(S)/窗口(W)/对象(O)] &lt;实时<br />&gt;: _e</span>
        </div>
        <div class="cmdline">
          <div class="cl-left"><span class="vg"></span><b>X</b><span class="cl-w">{@render ic('wrench')}</span></div>
          <div class="cl-input">
            <span class="cl-p">{@render ic('prompt')}</span>
            <span class="caret dark"></span>
            <em>键入命令</em>
            <span class="up"></span>
          </div>
        </div>
      </div>
    </div>

    <aside class="side right">
      <div class="vpanel">
        <span class="vgrip"></span>
        {#each rightTools as n}<span class="vtool">{@render ic(n)}</span>{/each}
      </div>
    </aside>
  </main>

  <div class="layouts">
    <span class="tab-burger l">{@render ic('burger')}</span>
    <span class="tab-on model">模型</span>
    <span class="ltab">布局1</span>
    <span class="slash"></span>
    <span class="tab-add l2">{@render ic('plus')}</span>
    <span class="slash"></span>
  </div>

  <footer class="status">
    {#each statusGroups as g}
      <div class="sgroup" style="width:{g.w}px;margin-left:{g.gap}px">
        {#each g.items as [n, w, on]}
          {#if n === '^'}
            <span class="scar" style="width:{w}px"><i class="caret narrow"></i></span>
          {:else if n[0] === '#'}
            <span class="stext" class:far={w > 100} style="width:{w}px">{n.slice(1)}</span>
          {:else}
            <span class="sit" class:on style="width:{w}px">{@render ic(n)}</span>
          {/if}
        {/each}
      </div>
    {/each}
  </footer>

  <!-- watermark, lies over the whole window -->
  <svg class="marks" viewBox="0 0 1600 1270" width="1600" height="1270">
    {#each marks as [x, y]}
      <text {x} {y} class="wm" font-size="33" textLength="410" lengthAdjust="spacingAndGlyphs" transform="rotate(-43 {x} {y})">知末网 www.znzmo.com</text>
    {/each}
    <text x="1407" y="1196" class="brand" font-size="62" textLength="123" lengthAdjust="spacingAndGlyphs">知末</text>
    <text x="1360" y="1243" class="idn" font-size="34" textLength="227" lengthAdjust="spacingAndGlyphs">ID: 1181490562</text>
  </svg>
  <div class="edge"></div>
</div>

<style>
  :global(body) {
    margin: 0;
    background: #222936;
  }
  .app {
    position: relative;
    width: 1600px;
    height: 1270px;
    overflow: hidden;
    display: flex;
    flex-direction: column;
    padding-top: 2px;
    box-sizing: border-box;
    background: #222936;
    color: #d4d8de;
    font-family: "Noto Sans CJK SC", "Noto Sans", sans-serif;
    font-size: 12px;
  }
  .edge {
    position: absolute;
    inset: 0;
    border: 1px solid #0a84c8;
    border-top-width: 2px;
    border-bottom-width: 2px;
    pointer-events: none;
  }
  .glyph {
    display: block;
    width: 100%;
    height: 100%;
  }

  /* title bar */
  .title {
    height: 26px;
    display: flex;
    align-items: center;
  }
  .t-left {
    width: 560px;
    box-sizing: border-box;
    padding-left: 14px;
    display: flex;
    align-items: center;
  }
  .logo {
    width: 23px;
    height: 20px;
    background: linear-gradient(#e0223f, #b40f2c);
    color: #fff;
    font: 700 16px "Liberation Sans", sans-serif;
    text-align: center;
    line-height: 20px;
  }
  .caret {
    width: 0;
    height: 0;
    border-left: 3px solid transparent;
    border-right: 3px solid transparent;
    border-top: 4px solid #c4c8ce;
    display: inline-block;
  }
  .caret.wide {
    margin: 0 5px 0 3px;
  }
  .caret.narrow {
    width: 0;
    margin: 0 2.500px;
    flex: none;
  }
  .qat {
    display: flex;
    align-items: center;
    margin-left: 3px;
  }
  .qat .tool {
    width: 22.4px;
    height: 20px;
    padding: 1px 2px;
    box-sizing: border-box;
  }
  .qat-more {
    width: 8px;
    height: 7px;
    margin: 0 6px 0 7px;
    border-top: 1px solid #c4c8ce;
    background: linear-gradient(#c4c8ce, #c4c8ce) center 3px / 8px 3px no-repeat;
  }
  .share {
    width: 16px;
    height: 16px;
  }
  .share-t {
    color: #6db3e8;
    margin-left: 3px;
  }
  .t-mid {
    width: 440px;
    display: flex;
    align-items: center;
    gap: 14px;
    color: #dcdfe4;
    font-family: "Liberation Sans", "Noto Sans CJK SC", sans-serif;
    font-size: 12px;
    line-height: 16px;
  }
  .t-right {
    flex: 1;
    display: flex;
    align-items: center;
    position: relative;
    height: 100%;
  }
  .tri {
    border-left: 4px solid #c4c8ce;
    border-top: 4px solid transparent;
    border-bottom: 4px solid transparent;
  }
  .search {
    width: 163px;
    height: 19px;
    line-height: 19px;
    margin-left: 4px;
    padding-left: 4px;
    background: #434c5e;
    color: #98a0ac;
    font-style: italic;
    font-size: 11px;
    box-sizing: content-box;
  }
  .mini {
    width: 15px;
    height: 15px;
    flex: none;
  }
  .m1 {
    margin-left: 6px;
  }
  .m2 {
    margin-left: 7px;
  }
  .login {
    margin-left: 2px;
  }
  .c1 {
    margin-left: 56px;
  }
  .m3 {
    margin-left: 10px;
  }
  .m4 {
    margin-left: 8px;
  }
  .c2 {
    margin-left: 3px;
  }
  .vbar {
    width: 1px;
    height: 18px;
    background: #3d4656;
    margin-left: 8px;
  }
  .m5 {
    margin-left: 9px;
  }
  .c3 {
    margin-left: 6px;
  }
  .win {
    flex: none;
  }
  .win.min {
    width: 10px;
    height: 1px;
    background: #d4d8de;
    margin-left: 78px;
  }
  .win.max {
    width: 8px;
    height: 10px;
    border: 1px solid #d4d8de;
    border-radius: 1px;
    margin-left: 33px;
  }
  .win.close {
    margin-left: 33px;
    font: 15px "Liberation Sans", sans-serif;
    color: #d4d8de;
  }

  /* menu */
  .menu {
    height: 21px;
    border-bottom: 1px solid #3b4453;
    display: flex;
    align-items: center;
    gap: 22.2px;
    padding-left: 17px;
    position: relative;
    color: #bfc4cb;
    font-size: 11.5px;
  }
  .menu-win {
    position: absolute;
    right: 13px;
    top: 2px;
    display: flex;
    align-items: center;
    gap: 22px;
    height: 18px;
  }
  .d-min {
    width: 10px;
    height: 1px;
    background: #c4c8ce;
  }
  .d-max {
    width: 7px;
    height: 9px;
    border: 1px solid #c4c8ce;
  }
  .menu-win b {
    font: 15px "Liberation Sans", sans-serif;
  }

  /* file tabs */
  .tabs {
    height: 24px;
    display: flex;
    align-items: center;
    color: #d0d4da;
  }
  .tab-burger {
    width: 17px;
    height: 16px;
    margin: 0 12px 0 18px;
  }
  .slash {
    width: 1px;
    height: 16px;
    background: #4d5666;
    transform: skewX(-22deg);
    flex: none;
  }
  .tab {
    padding-left: 10px;
    box-sizing: border-box;
  }
  .tab-on {
    align-self: stretch;
    margin: 2px 0 0 0;
    width: 94px;
    box-sizing: border-box;
    padding-left: 16px;
    background: #3b4453;
    clip-path: polygon(6px 0, 100% 0, calc(100% - 6px) 100%, 0 100%);
    display: flex;
    align-items: center;
    color: #e4e7eb;
    font-size: 12px;
  }
  .tab-on em {
    font-style: normal;
    margin-left: 7px;
    color: #b4b8be;
    font-size: 15px;
  }
  .tab-add {
    width: 14px;
    height: 14px;
    margin: 0 15px 0 7px;
  }

  /* toolbars */
  .tools {
    height: 81px;
    background: #3b4453;
    box-sizing: border-box;
    padding: 4px 0 0 4px;
  }
  .row {
    display: flex;
    align-items: center;
    height: 22px;
  }
  .r2 {
    margin-top: 3px;
  }
  .r3 {
    margin-top: 2px;
    height: 23px;
  }
  .panel {
    display: flex;
    align-items: center;
    height: 100%;
    box-sizing: border-box;
    border: 1px solid #2d3441;
    padding-right: 2px;
  }
  .grip {
    width: 3px;
    height: 15px;
    margin: 0 2px 0 2px;
    flex: none;
    background: repeating-linear-gradient(#aab0ba 0 1px, transparent 1px 3px);
  }
  .tool {
    width: 21.5px;
    height: 18px;
    padding: 0 1.5px;
    box-sizing: border-box;
    flex: none;
  }
  .sep {
    width: 1px;
    height: 18px;
    background: #2d3441;
    margin: 0 2.5px;
    flex: none;
  }
  .combo {
    background: #fff;
    color: #111;
    height: 20px;
    display: flex;
    align-items: center;
    box-sizing: border-box;
    position: relative;
    font: 12px "Noto Sans", "Liberation Sans", sans-serif;
    flex: none;
  }
  .combo::after {
    content: "";
    position: absolute;
    right: 5px;
    top: 6px;
    width: 5px;
    height: 5px;
    border-right: 1px solid #666;
    border-bottom: 1px solid #666;
    transform: rotate(45deg);
  }
  .layerbox {
    margin-left: 1px;
    width: 375px;
    flex: none;
  }
  .layercombo {
    width: 281px;
    margin-left: -1px;
    padding-left: 3px;
  }
  .st {
    width: 17px;
    height: 17px;
    margin-right: 1.5px;
    flex: none;
  }
  .swatch {
    width: 12px;
    height: 14px;
    margin-left: 1px;
    background: #00e600;
    border: 1px solid #333;
    box-sizing: border-box;
  }
  .lname {
    margin-left: 7px;
  }
  .strip {
    display: flex;
    align-items: center;
    gap: 4px;
    margin-left: 0;
  }
  .strip .grip {
    margin: 0 1px 0 1px;
  }
  .byblock {
    width: 142px;
    padding-left: 5px;
    margin-right: 0;
  }
  .box {
    width: 12px;
    height: 15px;
    border: 1px solid #777;
    box-sizing: border-box;
    margin-right: 3px;
  }
  .bylayer {
    width: 150px;
    padding-left: 5px;
  }
  .bylayer2 {
    width: 117px;
    padding-left: 5px;
    margin-left: 2px;
  }
  .bycolor {
    width: 112px;
    padding-left: 10px;
    margin-left: 2px;
    background: #dcdee1;
    color: #8a8e94;
  }
  .rule {
    height: 1px;
    background: #111;
    margin-right: 5px;
  }
  .rule.long {
    width: 57px;
  }
  .rule.short {
    width: 33px;
  }
  .p2a {
    width: 601px;
    flex: none;
  }
  .p2b {
    width: 456px;
    margin-left: 2px;
    flex: none;
  }
  .standard {
    width: 113px;
    padding-left: 18px;
    font-size: 12px;
  }

  /* work area */
  .work {
    display: flex;
    height: 1055px;
  }
  .side {
    background: #3b4453;
    flex: none;
  }
  .side.left {
    width: 31px;
    padding-left: 5px;
    box-sizing: border-box;
  }
  .side.right {
    width: 34px;
    padding-left: 5px;
    box-sizing: border-box;
  }
  .vpanel {
    width: 22px;
    box-sizing: border-box;
    border: 1px solid #2d3441;
    background: #37404e;
    display: flex;
    flex-direction: column;
    align-items: center;
    padding-bottom: 2px;
  }
  .vgrip {
    width: 14px;
    height: 3px;
    margin: 3px 0 3px;
    background: repeating-linear-gradient(90deg, #aab0ba 0 1px, transparent 1px 2px);
  }
  .vtool {
    width: 18px;
    height: 20.4px;
    padding: 1px 0;
    box-sizing: border-box;
  }
  .canvas {
    position: relative;
    width: 1535px;
    height: 1055px;
    background: #000;
    flex: none;
  }
  .draw {
    display: block;
  }
  .draw text {
    font-family: "Noto Sans CJK SC", sans-serif;
  }
  .draw path,
  .draw circle,
  .draw rect {
    fill: none;
  }
  .g-frame {
    stroke: #00d400;
    stroke-width: 1.5;
  }
  .w-frame {
    stroke: #fff;
    stroke-width: 4;
  }
  .w-sel {
    stroke: #c8d8f2;
    stroke-width: 4;
  }
  .w-box {
    stroke: #fff;
    stroke-width: 3;
  }
  .g-line {
    stroke: #00b800;
    stroke-width: 1.4;
  }
  .w-ul {
    stroke: #fff;
    stroke-width: 3;
  }
  .w-ul2 {
    stroke: #ddd;
    stroke-width: 1.2;
  }
  .metal path,
  .metal rect {
    stroke: #bdbdbd;
    stroke-width: 1.2;
  }
  .metal.hot path,
  .metal.hot rect {
    stroke: #f0f0f0;
    stroke-width: 1.6;
  }
  .draw rect.plate {
    stroke: #c8c8c8;
    stroke-width: 1.3;
    fill: #000;
  }
  .red {
    stroke: #cc0000;
    stroke-width: 1.5;
    stroke-dasharray: 24 5 5 5;
  }
  .arcs {
    stroke-dasharray: 30 6 5 6;
  }
  .gray {
    stroke: #c8c8c8;
    stroke-width: 1.2;
  }
  .dim {
    stroke: #bcbc00;
    stroke-width: 1.5;
  }
  .bubble {
    stroke: #c4c400;
    stroke-width: 1.6;
  }
  .g-mark {
    stroke: #00e000;
    stroke-width: 3;
  }
  .g-bar {
    stroke: #00e000;
    stroke-width: 4;
  }
  .dash {
    stroke: #aaa;
    stroke-width: 1.4;
  }
  .cross {
    stroke: #cfcfcf;
    stroke-width: 1;
  }
  .draw .n {
    fill: #c8c8c8;
    font-family: Roboto, "Liberation Sans", sans-serif;
    font-weight: 300;
  }
  .draw .c {
    fill: #fafafa;
    font-weight: 500;
  }
  .cube-ring {
    stroke: #2b2b2b;
    stroke-width: 10;
  }
  .draw rect.cube-a {
    fill: #9a9a9a;
  }
  .draw rect.cube-b {
    fill: #8d8d8d;
  }
  .draw .cube-t {
    fill: #5e5e5e;
  }
  .draw .cube-l {
    fill: #6e6e6e;
  }
  .draw rect.wcs {
    fill: #4f4f4f;
  }
  .draw .wcs-t {
    fill: #9a9a9a;
    font-family: "Liberation Sans", sans-serif;
  }

  /* command line */
  .cmd {
    position: absolute;
    left: 501px;
    top: 962px;
    width: 533px;
    font: 11.5px "Liberation Mono", "Noto Sans CJK SC", monospace;
    color: #dcdcdc;
  }
  .hist {
    margin-left: 60px;
    height: 69px;
    display: flex;
    flex-direction: column;
    align-items: flex-start;
  }
  .hist span {
    background: rgba(112, 112, 112, 0.82);
    padding: 0 1px;
    line-height: 14px;
    white-space: nowrap;
    box-sizing: border-box;
  }
  .h1 {
    width: 86px;
    height: 13px;
  }
  .h2 {
    width: 288px;
    height: 14px;
    margin-top: 5px;
  }
  .h3 {
    width: 465px;
    height: 29px;
    margin-top: 4px;
  }
  .cmdline {
    height: 22px;
    display: flex;
  }
  .cl-left {
    width: 55px;
    background: rgba(59, 68, 83, 0.88);
    display: flex;
    align-items: center;
    color: #ddd;
  }
  .vg {
    width: 3px;
    height: 17px;
    margin-left: 4px;
    background: repeating-linear-gradient(#c0c4ca 0 1px, transparent 1px 3px);
  }
  .cl-left b {
    margin-left: 8px;
    font: 13px "Liberation Sans", sans-serif;
  }
  .cl-w {
    width: 16px;
    height: 16px;
    margin-left: 8px;
  }
  .cl-input {
    flex: 1;
    background: rgba(190, 190, 190, 0.88);
    display: flex;
    align-items: center;
    position: relative;
  }
  .cl-p {
    width: 18px;
    height: 18px;
    margin-left: 2px;
  }
  .caret.dark {
    border-top-color: #444;
    margin-left: 3px;
  }
  .cl-input em {
    margin-left: 7px;
    color: #666;
    font: italic 12px "Noto Sans CJK SC", sans-serif;
  }
  .up {
    position: absolute;
    right: 3px;
    top: 8px;
    border-left: 4px solid transparent;
    border-right: 4px solid transparent;
    border-bottom: 6px solid #444;
  }

  /* layouts + status */
  .layouts {
    height: 28px;
    display: flex;
    align-items: center;
    position: relative;
    color: #d0d4da;
  }
  .tab-burger.l {
    margin: 0 10px 0 18px;
  }
  .tab-on.model {
    margin: 0 0 4px 0;
    width: 48px;
    padding-left: 12px;
  }
  .ltab {
    margin-left: 10px;
    width: 38px;
  }
  .tab-add.l2 {
    margin: 0 15px;
    width: 14px;
  }
  .status {
    height: 32px;
    padding-top: 4px;
    box-sizing: border-box;
    display: flex;
    align-items: flex-start;
  }
  .sgroup {
    height: 22px;
    background: #3b4453;
    display: flex;
    align-items: center;
    flex: none;
  }
  .sit {
    height: 22px;
    box-sizing: border-box;
    padding: 3px;
    display: flex;
    justify-content: center;
    flex: none;
  }
  .sit :global(svg) {
    width: 16px;
    height: 16px;
  }
  .sit.on {
    background: #5b93c8;
  }
  .scar {
    display: flex;
    justify-content: center;
    flex: none;
  }
  .scar .caret.narrow {
    margin: 0;
  }
  .stext {
    text-align: center;
    flex: none;
    white-space: nowrap;
    font-size: 12px;
    color: #d4d8de;
    letter-spacing: -0.3px;
    font-family: "Liberation Sans", "Noto Sans CJK SC", sans-serif;
  }
  .stext.far {
    text-align: right;
  }

  /* watermark */
  .marks {
    position: absolute;
    left: 0;
    top: 0;
    pointer-events: none;
  }
  .wm {
    font-family: "Liberation Sans", "Noto Sans CJK SC", sans-serif;
    font-weight: 700;
    fill: rgba(255, 255, 255, 0.07);
    stroke: rgba(255, 255, 255, 0.06);
    stroke-width: 2;
  }
  .brand {
    font-family: "Noto Sans CJK SC", sans-serif;
    font-weight: 700;
    fill: rgba(205, 205, 205, 0.88);
  }
  .idn {
    font-family: "Noto Sans", "Liberation Sans", sans-serif;
    fill: #f4f4f4;
    stroke: #f4f4f4;
    stroke-width: 0.5;
  }
</style>
